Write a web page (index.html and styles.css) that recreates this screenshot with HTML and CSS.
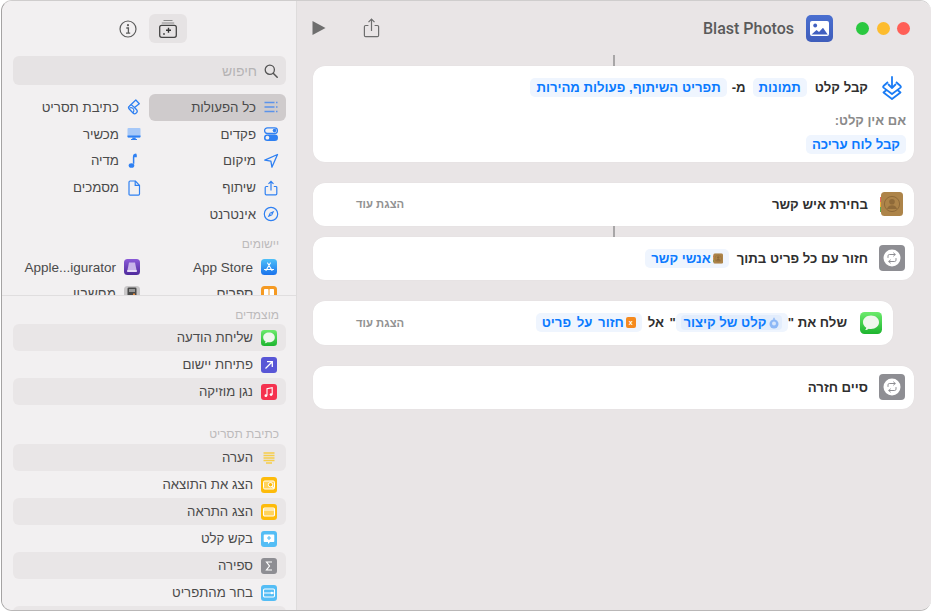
FILE: index.html
```html
<!DOCTYPE html>
<html lang="he">
<head>
<meta charset="utf-8">
<title>Blast Photos</title>
<link rel="stylesheet" href="styles.css">
</head>
<body>
<svg class="sprite" width="0" height="0">
  <symbol id="loop" viewBox="0 0 26 26">
    <rect width="26" height="26" rx="4" fill="#8e8e93"/>
    <circle cx="13" cy="13" r="8.500" fill="#fff"/>
    <path d="M9 12.500v-1.700c0-.8.6-1.300 1.300-1.300h5.700M14.600 8l1.700 1.500-1.700 1.500M17 13.500v1.700c0 .8-.6 1.300-1.300 1.300H10M11.400 18l-1.700-1.500 1.700-1.500" fill="none" stroke="#8e8e93" stroke-width="1" stroke-linecap="round" stroke-linejoin="round"/>
  </symbol>
  <symbol id="contacts" viewBox="0 0 23 24">
    <rect x="0" y="5" width="3" height="5" fill="#e9685a"/><rect x="0" y="10" width="3" height="5" fill="#f0b33c"/><rect x="0" y="15" width="3" height="5" fill="#5dab54"/>
    <rect x="1" y="0" width="22" height="24" rx="3.500" fill="#ad8449"/>
    <circle cx="12" cy="12" r="7.600" fill="none" stroke="#8f6a39" stroke-width="1"/>
    <circle cx="12" cy="9.800" r="2.800" fill="#8f6a39"/>
    <path d="M7 17c.8-2.800 2.800-3.800 5-3.800s4.200 1 5 3.800z" fill="#8f6a39"/>
  </symbol>
  <symbol id="bubble" viewBox="0 0 22 22">
    <defs><linearGradient id="gm" x1="0" y1="0" x2="0" y2="1"><stop offset="0" stop-color="#6ceb6c"/><stop offset="1" stop-color="#1db52f"/></linearGradient></defs>
    <rect width="22" height="22" rx="4.500" fill="url(#gm)"/>
    <path d="M11 3.600c-4.600 0-8 2.900-8 6.700 0 2.300 1.300 4.200 3.300 5.400-.1.900-.6 1.800-1.200 2.400 1.400-.1 2.700-.7 3.600-1.400.7.200 1.500.3 2.300.3 4.600 0 8-2.900 8-6.700s-3.400-6.700-8-6.700z" fill="#f0f7ee"/>
  </symbol>
</svg>
<div class="window">
  <aside class="sidebar">
    <section class="upper" dir="rtl">
      <div class="side-tools" dir="ltr">
        <button class="tool-plain" type="button" aria-label="info">
          <svg width="18" height="18" viewBox="0 0 18 18"><circle cx="9" cy="9" r="8" fill="none" stroke="#5c5c5c" stroke-width="1.200"/><circle cx="9" cy="5.200" r="1.100" fill="#5c5c5c"/><path d="M7.300 8h2.100v5M7 13.200h4.200" fill="none" stroke="#5c5c5c" stroke-width="1.300"/></svg>
        </button>
        <button class="tool-on" type="button" aria-label="library">
          <svg width="20" height="20" viewBox="0 0 20 20"><path d="M5.500 1.500h9M3.800 4h12.400" stroke="#8a8a8a" stroke-width="1.200" fill="none"/><rect x="1.700" y="6.300" width="16.600" height="12" rx="2" fill="none" stroke="#444" stroke-width="1.300"/><path d="M10.500 8.800v5M8 11.300h5" stroke="#333" stroke-width="1.400"/><circle cx="6" cy="15" r=".9" fill="#444"/></svg>
        </button>
      </div>
      <div class="search">
        <svg width="14" height="14" viewBox="0 0 14 14"><circle cx="5.800" cy="5.800" r="4.600" fill="none" stroke="#555" stroke-width="1.300"/><path d="M9.200 9.200l4 4" stroke="#555" stroke-width="1.500" stroke-linecap="round"/></svg>
        <span>חיפוש</span>
      </div>
      <div class="cats">
        <div class="cat selected"><svg viewBox="0 0 16 16"><path d="M1.500 3.500h10M1.500 8h10M1.500 12.500h10" stroke="#5b93ea" stroke-width="1.400"/><path d="M13 3.500h1.500M13 8h1.500M13 12.500h1.500" stroke="#5b93ea" stroke-width="1.400"/></svg><span>כל הפעולות</span></div>
        <div class="cat"><svg viewBox="0 0 16 16"><path d="M9.800 1L13.300 4.800 8.500 8.500 10.800 11Q12 12.800 10 14.300 8.500 15.500 7 14L3 9.800Q1.800 8.400 3.300 7.200Z" fill="none" stroke="#2f80f2" stroke-width="1.300" stroke-linejoin="round"/><path d="M3.500 9Q6 8 7.500 10 8.500 11.500 7 14M8.500 8.500L5 5.500" fill="none" stroke="#2f80f2" stroke-width="1.100"/></svg><span>כתיבת תסריט</span></div>
        <div class="cat"><svg viewBox="0 0 16 16"><rect x="1.600" y="1.800" width="12.800" height="5.700" rx="2.800" fill="none" stroke="#2f80f2" stroke-width="1.300"/><circle cx="11.500" cy="4.600" r="1.800" fill="#2f80f2"/><rect x="1" y="8.500" width="14" height="6.400" rx="3.200" fill="#2f80f2"/><circle cx="4.400" cy="11.700" r="1.900" fill="#f2f0f1"/></svg><span>פקדים</span></div>
        <div class="cat"><svg viewBox="0 0 16 16"><rect x="1.500" y="2" width="13" height="9.500" rx="1" fill="#a6c8f8"/><path d="M1.500 9.500h13v1c0 .6-.4 1-1 1h-11c-.6 0-1-.4-1-1z" fill="#2f80f2"/><rect x="6.300" y="11.500" width="3.400" height="1.500" fill="#2f80f2"/><rect x="5" y="13" width="6" height="1" fill="#2f80f2"/></svg><span>מכשיר</span></div>
        <div class="cat"><svg viewBox="0 0 16 16"><path d="M14.500 1.500L1.800 7.200l6.100.9 1 6.100z" fill="none" stroke="#2f80f2" stroke-width="1.300" stroke-linejoin="round"/></svg><span>מיקום</span></div>
        <div class="cat"><svg viewBox="0 0 16 16"><path d="M10.300 1.300C8 1.500 7.700 2.300 7.600 4v6.700" fill="none" stroke="#2f80f2" stroke-width="1.500"/><path d="M7.600 1.500h3.200v2.800H7.600z" fill="#2f80f2"/><ellipse cx="5.500" cy="12.500" rx="2.800" ry="2.300" fill="#2f80f2"/></svg><span>מדיה</span></div>
        <div class="cat"><svg viewBox="0 0 16 16"><path d="M5.200 6.500H3.300c-.7 0-1.100.4-1.100 1.100v6.200c0 .7.400 1.100 1.100 1.100h9.400c.7 0 1.100-.4 1.100-1.100V7.600c0-.7-.4-1.100-1.100-1.100h-1.900" fill="none" stroke="#2f80f2" stroke-width="1.200"/><path d="M8 10.500V1.500M5.500 3.800L8 1.300l2.500 2.500" fill="none" stroke="#2f80f2" stroke-width="1.200"/></svg><span>שיתוף</span></div>
        <div class="cat"><svg viewBox="0 0 16 16"><path d="M3 2.200C3 1.500 3.400 1 4.100 1h5.200L13.500 5.300v8.800c0 .6-.4 1-1.100 1H4.100c-.7 0-1.100-.4-1.100-1z" fill="none" stroke="#2f80f2" stroke-width="1.200" stroke-linejoin="round"/><path d="M9.200 1v4.400h4.300" fill="none" stroke="#2f80f2" stroke-width="1.200"/></svg><span>מסמכים</span></div>
        <div class="cat"><svg viewBox="0 0 16 16"><circle cx="8" cy="8" r="6.700" fill="none" stroke="#2f80f2" stroke-width="1.200"/><path d="M11.300 4.700L9.200 9.200 4.700 11.300 6.800 6.800z" fill="#2f80f2"/><circle cx="8" cy="8" r=".8" fill="#f2f0f1"/></svg><span>אינטרנט</span></div>
      </div>
      <h2 class="sect first">יישומים</h2>
      <div class="apps">
        <div class="app"><svg viewBox="0 0 16 16"><defs><linearGradient id="ga" x1="0" y1="0" x2="0" y2="1"><stop offset="0" stop-color="#4ec0f8"/><stop offset="1" stop-color="#1a72ec"/></linearGradient></defs><rect width="16" height="16" rx="3.500" fill="url(#ga)"/><path d="M5 11.500L9.400 4M11 11.500L6.600 4M3.500 10.500h9" stroke="#fff" stroke-width="1.100" stroke-linecap="round"/></svg><span>App Store</span></div>
        <div class="app"><svg viewBox="0 0 16 16"><defs><linearGradient id="gp" x1="0" y1="0" x2="0" y2="1"><stop offset="0" stop-color="#8a5ad8"/><stop offset="1" stop-color="#4f2a9c"/></linearGradient></defs><rect width="16" height="16" rx="3.500" fill="url(#gp)"/><path d="M5 3.500h6l1.500 7.500h-9z" fill="#c8b4ea"/><rect x="3" y="11" width="10" height="2" rx=".8" fill="#e6dcf7"/></svg><span>Apple...igurator</span></div>
        <div class="app"><svg viewBox="0 0 16 16"><rect width="16" height="16" rx="3.500" fill="#f59a23"/><rect x="3" y="3" width="4.500" height="10" rx=".8" fill="#fff"/><rect x="8.500" y="3" width="4.500" height="10" rx=".8" fill="#fff"/></svg><span>ספרים</span></div>
        <div class="app"><svg viewBox="0 0 16 16"><rect width="16" height="16" rx="3.500" fill="#c9c7c8"/><rect x="3.500" y="1.500" width="9" height="13" rx="1.300" fill="#4a4a4a"/><rect x="5" y="3" width="6" height="3" fill="#9a9a9a"/><rect x="9" y="7.500" width="2" height="5" fill="#e8893a"/></svg><span>מחשבון</span></div>
      </div>
    </section>
    <section class="lower" dir="rtl">
      <h2 class="sect pinned">מוצמדים</h2>
      <div class="row zebra"><svg><use href="#bubble"/></svg><span>שליחת הודעה</span></div>
      <div class="row"><svg viewBox="0 0 16 16"><rect width="16" height="16" rx="3" fill="#5856d6"/><path d="M4.500 11.500l6.500-6.500M6 4.700h5.300V10" fill="none" stroke="#fff" stroke-width="1.300"/></svg><span>פתיחת יישום</span></div>
      <div class="row zebra"><svg viewBox="0 0 16 16"><rect width="16" height="16" rx="3" fill="#f5324f"/><path d="M6 11.500V4.700l5.200-1.100v6.900" fill="none" stroke="#fff" stroke-width="1.100"/><circle cx="4.900" cy="11.700" r="1.400" fill="#fff"/><circle cx="10.100" cy="10.600" r="1.400" fill="#fff"/></svg><span>נגן מוזיקה</span></div>
      <h2 class="sect script">כתיבת תסריט</h2>
      <div class="row zebra"><svg viewBox="0 0 16 16"><path d="M2.500 3h11M2.500 5.500h11M2.500 8h11M2.500 10.500h11M5 13h6" stroke="#f6cd4a" stroke-width="1.300"/></svg><span>הערה</span></div>
      <div class="row"><svg viewBox="0 0 16 16"><rect width="16" height="16" rx="3" fill="#fdbb0a"/><rect x="2.500" y="4" width="11" height="8" rx="1.300" fill="#ffd35c" stroke="#fff" stroke-width="1"/><circle cx="9.500" cy="7.700" r="2.200" fill="#fdbb0a" stroke="#fff" stroke-width="1"/><path d="M11 9.400l2 2" stroke="#fff" stroke-width="1.200"/></svg><span>הצג את התוצאה</span></div>
      <div class="row zebra"><svg viewBox="0 0 16 16"><rect width="16" height="16" rx="3" fill="#fdbb0a"/><rect x="2.500" y="4" width="11" height="8" rx="1.200" fill="#ffd35c" stroke="#fff" stroke-width="1.100"/><path d="M2.500 6h11" stroke="#fff" stroke-width="1"/></svg><span>הצג התראה</span></div>
      <div class="row"><svg viewBox="0 0 16 16"><rect width="16" height="16" rx="3" fill="#54bdf5"/><path d="M3.500 3.500h9c.5 0 .8.300.8.800v6c0 .5-.3.800-.8.800H9l-2 2v-2H3.500c-.5 0-.8-.3-.8-.8v-6c0-.5.300-.8.800-.8z" fill="#fff"/><path d="M8 5v4M6 7h4" stroke="#54bdf5" stroke-width="1.100"/></svg><span>בקש קלט</span></div>
      <div class="row zebra"><svg viewBox="0 0 16 16"><rect width="16" height="16" rx="3" fill="#8e8e93"/><path d="M11 4H5.500L8.500 8l-3 4H11" fill="none" stroke="#fff" stroke-width="1.200"/></svg><span>ספירה</span></div>
      <div class="row"><svg viewBox="0 0 16 16"><rect width="16" height="16" rx="3" fill="#54bdf5"/><rect x="2.500" y="4" width="11" height="8" rx="1.200" fill="none" stroke="#fff" stroke-width="1.100"/><path d="M2.500 8h11" stroke="#fff" stroke-width="1"/><circle cx="10.800" cy="8" r="1.200" fill="#fff"/></svg><span>בחר מהתפריט</span></div>
      <div class="row zebra"></div>
    </section>
  </aside>
  <main class="main">
    <header class="titlebar">
      <button class="play" type="button" aria-label="play"><svg width="14" height="16" viewBox="0 0 14 16"><path d="M.5 1l13 7-13 7z" fill="#6e6e6e"/></svg></button>
      <button class="share" type="button" aria-label="share"><svg width="17" height="20" viewBox="0 0 17 20"><path d="M5.400 7.500H2.600c-.8 0-1.200.4-1.200 1.200v8.700c0 .8.400 1.200 1.200 1.200h11.800c.8 0 1.200-.4 1.200-1.200V8.700c0-.8-.4-1.200-1.200-1.200h-2.800" fill="none" stroke="#6e6e6e" stroke-width="1.200"/><path d="M8.500 13V1.300M5.500 4.200l3-3 3 3" fill="none" stroke="#6e6e6e" stroke-width="1.200"/></svg></button>
      <h1 class="title">Blast Photos</h1>
      <div class="app-icon"><svg width="19" height="15" viewBox="0 0 19 15"><rect width="19" height="15" rx="2" fill="#fff"/><circle cx="5.200" cy="4.500" r="1.900" fill="#4160c0"/><path d="M1.500 13.500l5-4.500 2.500 2 4-4.300 4.700 6.800z" fill="#4160c0"/></svg></div>
      <div class="lights"><i class="green"></i><i class="yellow"></i><i class="red"></i></div>
    </header>
    <div class="flow">
      <div class="wire"></div>
      <div class="card first-card" dir="rtl">
        <div class="line">
          <svg class="ic-get" width="20" height="24" viewBox="0 0 20 24"><path d="M10 1v11M6.500 8.500L10 12l3.500-3.500" fill="none" stroke="#1a7cf5" stroke-width="1.800" stroke-linecap="round" stroke-linejoin="round"/><path d="M6 6L1.500 10Q.8 10.800 1.500 11.600L10 18 18.500 11.600Q19.200 10.800 18.500 10L14 6M4.500 14L1.500 16.500 10 23 18.500 16.500 15.500 14" fill="none" stroke="#1a7cf5" stroke-width="1.800" stroke-linejoin="round"/></svg>
          <b>קבל קלט</b>
          <span class="pill">תמונות</span>
          <b class="mi">מ-</b>
          <span class="pill">תפריט השיתוף, פעולות מהירות</span>
        </div>
        <div class="sub">אם אין קלט:</div>
        <span class="pill fallback">קבל לוח עריכה</span>
      </div>
      <div class="card simple gap-big" dir="rtl">
        <svg class="ic23"><use href="#contacts"/></svg>
        <b>בחירת איש קשר</b>
        <span class="more">הצגת עוד</span>
      </div>
      <div class="wire"></div>
      <div class="card simple" dir="rtl">
        <svg class="ic26"><use href="#loop"/></svg>
        <b>חזור עם כל פריט בתוך</b>
        <span class="pill mini-gap"><svg class="tiny" viewBox="0 0 23 24"><use href="#contacts"/></svg>אנשי קשר</span>
      </div>
      <div class="card simple inset gap-big" dir="rtl">
        <svg class="ic22"><use href="#bubble"/></svg>
        <b>שלח את "</b>
        <span class="pill outer"><span class="inner"><svg class="tiny2" viewBox="0 0 12 12"><circle cx="6" cy="7" r="4.500" fill="#8db8f6"/><circle cx="6" cy="6.500" r="2" fill="#d7e6fc"/><path d="M6 .8v3" stroke="#8db8f6" stroke-width="1.400"/></svg>קלט של קיצור</span></span>
        <b class="to">" אל</b>
        <span class="pill item"><span class="orange">x</span>חזור על פריט</span>
        <span class="more">הצגת עוד</span>
      </div>
      <div class="card simple gap-big" dir="rtl">
        <svg class="ic26"><use href="#loop"/></svg>
        <b>סיים חזרה</b>
      </div>
    </div>
  </main>
</div>
</body>
</html>
```
FILE: styles.css
```css
* { box-sizing: border-box; }
html, body { margin: 0; padding: 0; height: 100%; background: #fff; overflow: hidden; }
body { padding-left: 1px; font-family: "Liberation Sans", "DejaVu Sans", sans-serif; color: #4a4a4a; }
.sprite { position: absolute; }
button { border: 0; background: none; padding: 0; display: flex; align-items: center; justify-content: center; }

.window {
  display: flex; width: 930px; height: 611px; overflow: hidden;
  border: 1px solid #b9b7b7; border-left-color: #a5a3a3; border-right: 0; border-top-color: #cfcdcd;
  border-radius: 11px;
}
.sidebar {
  width: 295px; flex: none; display: flex; flex-direction: column;
  background: #f2f0f1; border-right: 1px solid #dedcdc;
}
.upper { height: 295px; flex: none; overflow: hidden; padding: 0 10px 0 11px; border-bottom: 1px solid #e0dedf; }
.side-tools { height: 55px; display: flex; padding: 13px 0 0 105px; gap: 11px; align-items: flex-start; }
.tool-plain { width: 20px; height: 29px; }
.tool-on { width: 38px; height: 29px; border-radius: 6px; background: #e6e3e4; }
.search {
  height: 29px; border-radius: 6px; background: #e6e3e4; display: flex; align-items: center;
  gap: 7px; padding-right: 8px; font-size: 14px; color: #b5b3b4;
}
.cats { display: grid; grid-template-columns: 137px 136px; grid-auto-rows: 26.75px; margin-top: 9px; }
.cat { display: flex; align-items: center; gap: 7px; padding-right: 7px; font-size: 13.3px; white-space: nowrap; }
.cat svg { width: 16px; height: 16px; flex: none; }
.cat.selected { background: #cfcbcc; border-radius: 6px; }
.sect { margin: 0; font-size: 12px; font-weight: 400; color: #bcbabb; }
.sect.first { height: 26px; padding: 9px 7px 0 0; line-height: 14px; }
.apps { display: grid; grid-template-columns: 137px 136px; grid-auto-rows: 26.5px; }
.app { display: flex; align-items: center; gap: 8px; padding-right: 9px; font-size: 13.5px; white-space: nowrap; }
.app svg { width: 16px; height: 16px; flex: none; }
.lower { flex: 1; overflow: hidden; padding: 0 10px 0 11px; }
.sect.pinned { height: 28px; padding: 12px 7px 0 0; line-height: 14px; }
.sect.script { height: 39px; padding: 22px 7px 0 0; line-height: 14px; }
.row { height: 27px; flex: none; display: flex; align-items: center; gap: 8px; padding-right: 9px; font-size: 13.2px; border-radius: 6px; white-space: nowrap; }
.row svg { width: 16px; height: 16px; flex: none; }
.row.zebra { background: #e9e6e7; }

.main { flex: 1; min-width: 0; background: #e9e5e6; display: flex; flex-direction: column; }
.titlebar { height: 54px; flex: none; display: flex; align-items: center; padding: 0 21px 0 14px; position: relative; }
.play { width: 16px; }
.share { width: 17px; margin-left: 36px; }
.title { margin: 0 12px 0 auto; font-size: 16px; font-weight: 500; color: #5a5a5a; font-family: "Roboto", "Liberation Sans", sans-serif; }
.app-icon {
  width: 27px; height: 27px; border-radius: 5px; background: linear-gradient(#4a6fd0, #3f5dbb);
  display: flex; align-items: center; justify-content: center; margin-right: 23px;
}
.lights { display: flex; gap: 7.5px; }
.lights i { width: 13px; height: 13px; border-radius: 50%; display: block; }
.green { background: #2ac840; } .yellow { background: #fdbc2e; } .red { background: #ff5f57; }

.flow { padding: 0 17px 0 16px; display: flex; flex-direction: column; }
.wire { width: 2px; height: 10.5px; background: #a8a6a7; align-self: center; flex: none; }
.card { background: #fff; border-radius: 12px; box-shadow: 0 0 1px rgba(0,0,0,.08); }
.first-card { height: 96px; padding: 0 8px 0 0; display: flex; flex-direction: column; align-items: flex-start; flex: none; }
.line { display: flex; align-items: center; height: 22px; margin-top: 11px; padding-right: 4px; }
.ic-get { flex: none; margin-left: 14px; }
.card b { font-size: 13.2px; color: #2f2f2f; font-weight: 700; white-space: nowrap; }
.pill {
  display: inline-flex; align-items: center; height: 19px; padding: 0 6px; border-radius: 5px; background: #eff5fe;
  color: #0a7aff; font-size: 13.2px; font-weight: 700; white-space: nowrap;
}
.line .pill:first-of-type { margin-right: 8px; }
.card .mi { margin: 0 7px 0 5px; }
.sub { margin-top: 14px; font-size: 13px; font-weight: 700; color: #8a8a8a; line-height: 16px; height: 16px; }
.fallback { margin-top: 6px; }
.simple { height: 43.5px; display: flex; align-items: center; padding: 0 9px 0 43px; flex: none; }
.gap-big { margin-top: 21px; }
.simple > svg { flex: none; }
.ic23 { width: 23px; height: 24px; margin-left: 12px; margin-right: 2px; }
.ic26 { width: 26px; height: 26px; margin-left: 11px; }
.ic22 { width: 22px; height: 22px; margin-left: 13px; }
.inset { width: 580px; padding-right: 11px; }
.more { margin-right: auto; font-size: 11.3px; font-weight: 700; color: #929292; white-space: nowrap; }
.mini-gap { margin-right: 8px; }
.tiny { width: 10px; height: 11px; margin-left: 2px; }
.tiny2 { width: 12px; height: 12px; margin-left: 2px; }
.outer { padding: 0 5.5px; background: #eff5fe; }
.inner { display: inline-flex; align-items: center; height: 15px; border-radius: 4px; padding: 0 2px; background: #e3edfc; }
.orange { width: 10px; height: 11px; border-radius: 2px; background: #f58a1f; color: #fff; font-size: 7px; display: inline-flex; align-items: center; justify-content: center; margin-left: 2px; }
.card .to { word-spacing: 2px; }
.item { margin-right: 6px; word-spacing: 2px; }
```
